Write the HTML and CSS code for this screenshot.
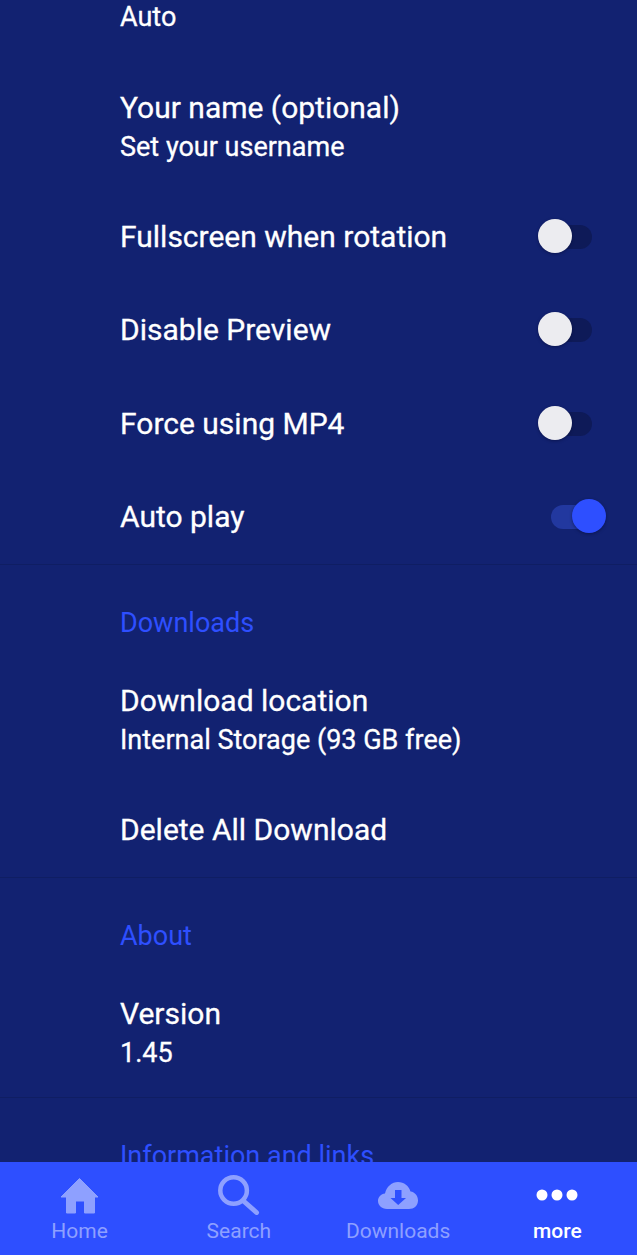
FILE: index.html
```html
<!DOCTYPE html>
<html lang="en">

<head>
    <meta charset="UTF-8">
    <meta name="viewport" content="width=device-width, initial-scale=1.0">
    <title>Settings</title>
    <link rel="stylesheet" href="styles.css">
</head>

<body>
    <div class="main-container">
        <div class="settings">
            <div class="row first-row">
                <div class="row-text">
                    <div class="row-sub">Auto</div>
                </div>
            </div>
            <div class="row double">
                <div class="row-text">
                    <div class="row-title">Your name (optional)</div>
                    <div class="row-sub">Set your username</div>
                </div>
            </div>
            <div class="row">
                <div class="row-title">Fullscreen when rotation</div>
                <div class="switch"></div>
            </div>
            <div class="row">
                <div class="row-title">Disable Preview</div>
                <div class="switch"></div>
            </div>
            <div class="row">
                <div class="row-title">Force using MP4</div>
                <div class="switch"></div>
            </div>
            <div class="row">
                <div class="row-title">Auto play</div>
                <div class="switch switch-on"></div>
            </div>

            <div class="category">Downloads</div>
            <div class="row double">
                <div class="row-text">
                    <div class="row-title">Download location</div>
                    <div class="row-sub">Internal Storage (93 GB free)</div>
                </div>
            </div>
            <div class="row">
                <div class="row-title">Delete All Download</div>
            </div>

            <div class="category">About</div>
            <div class="row double version-row">
                <div class="row-text">
                    <div class="row-title">Version</div>
                    <div class="row-sub">1.45</div>
                </div>
            </div>

            <div class="category">Information and links</div>
        </div>

        <nav class="tabbar">
            <div class="tab">
                <svg class="tab-icon" viewBox="0 0 42 42"><path stroke-linejoin="round" stroke-width="1" d="M20.500 5.500 L39 24 H35.500 V40 H25.500 V28 H16.500 V40 H7.500 V24 H2 Z"/></svg>
                <span>Home</span>
            </div>
            <div class="tab">
                <svg class="tab-icon" viewBox="0 0 42 42"><circle cx="15.600" cy="17.500" r="13.300" fill="none" stroke-width="4.500"/><path d="M25.500 28 L38.500 39.500" fill="none" stroke-width="5" stroke-linecap="round"/></svg>
                <span>Search</span>
            </div>
            <div class="tab">
                <svg class="tab-icon" viewBox="0 0 42 42"><path fill-rule="evenodd" d="M10 36 C4.500 36 1 32 1 28 C1 24 4 21 8 20.500 C9.500 13.500 15 9 21 9 C27 9 32 13 33.500 18.500 C38 19 41 23 41 27.500 C41 32.500 37 36 32 36 Z M18 17 V25 H13.500 L21.200 32 L29 25 H24.500 V17 Z"/></svg>
                <span>Downloads</span>
            </div>
            <div class="tab tab-active">
                <svg class="tab-icon" viewBox="0 0 42 42"><circle cx="6" cy="22" r="5.500"/><circle cx="21" cy="22" r="5.500"/><circle cx="36" cy="22" r="5.500"/></svg>
                <span>more</span>
            </div>
        </nav>
    </div>
</body>

</html>
```

FILE: styles.css
```css
body {
    font-family: Roboto, "Liberation Sans", sans-serif;
    margin: 0;
    padding: 0;
    background-color: #122271;
}

.main-container {
    height: 1255px;
    display: flex;
    flex-direction: column;
    overflow: hidden;
}

.settings {
    flex: 1;
    min-height: 0;
    overflow: hidden;
}

.row {
    height: 93.3px;
    box-sizing: border-box;
    padding-left: 120px;
    display: flex;
    align-items: center;
    justify-content: space-between;
    color: #fff;
}

.first-row {
    height: 63px;
    align-items: flex-start;
}

.double {
    height: 127.5px;
}

.row-title {
    font-size: 30px;
    line-height: 38px;
    -webkit-text-stroke: 0.3px #fff;
}

.row-sub {
    font-size: 27px;
    line-height: 34px;
    -webkit-text-stroke: 0.3px #fff;
}

.double .row-sub {
    margin-top: 3px;
}

.category {
    height: 92.3px;
    box-sizing: border-box;
    padding: 41px 0 0 120px;
    border-top: 1px solid #0f1e63;
    color: #2e4fff;
    font-size: 27px;
    line-height: 34px;
    white-space: nowrap;
}

.switch {
    position: relative;
    width: 41px;
    height: 24px;
    margin-right: 45px;
    border-radius: 12px;
    background-color: #0e1a58;
}

.switch::after {
    content: "";
    position: absolute;
    left: -13px;
    top: -6px;
    width: 34px;
    height: 34px;
    border-radius: 50%;
    background-color: #ececf0;
    box-shadow: 0 1px 3px rgba(5, 10, 50, 0.5);
}

.switch-on {
    margin-right: 45px;
    background-color: #22389f;
}

.switch-on::after {
    left: 21px;
    background-color: #2e4fff;
}

.tabbar {
    flex: none;
    height: 93px;
    display: grid;
    grid-template-columns: repeat(4, 1fr);
    background-color: #2e4fff;
    color: #8ea0ff;
}

.tab {
    display: flex;
    flex-direction: column;
    align-items: center;
    justify-content: flex-end;
    padding-bottom: 10px;
    font-size: 21px;
    line-height: 28px;
}

.tab-icon {
    width: 42px;
    height: 42px;
    margin-bottom: 2px;
    fill: #8ea0ff;
    stroke: #8ea0ff;
    stroke-width: 0;
}

.tab-active {
    color: #fff;
    font-weight: 500;
}

.tab-active .tab-icon {
    fill: #fff;
    stroke: #fff;
}
```
